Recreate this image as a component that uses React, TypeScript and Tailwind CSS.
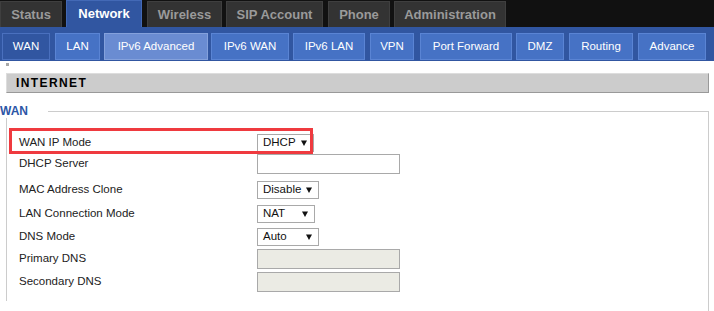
import React from "react";

const topTabs = [
  { label: "Status", w: "w-[62px]", ml: "ml-0", active: false },
  { label: "Network", w: "w-[76px]", ml: "ml-[4px]", active: true },
  { label: "Wireless", w: "w-[75px]", ml: "ml-[5px]", active: false },
  { label: "SIP Account", w: "w-[97px]", ml: "ml-[4px]", active: false },
  { label: "Phone", w: "w-[62px]", ml: "ml-[5px]", active: false },
  { label: "Administration", w: "w-[112px]", ml: "ml-[4px]", active: false },
];

const subTabs = [
  { label: "WAN", w: "w-[48px]", ml: "ml-[2px]", kind: "active" },
  { label: "LAN", w: "w-[45px]", ml: "ml-[5px]", kind: "normal" },
  { label: "IPv6 Advanced", w: "w-[104px]", ml: "ml-[4px]", kind: "hover" },
  { label: "IPv6 WAN", w: "w-[78px]", ml: "ml-[3px]", kind: "normal" },
  { label: "IPv6 LAN", w: "w-[72px]", ml: "ml-[4px]", kind: "normal" },
  { label: "VPN", w: "w-[44px]", ml: "ml-[5px]", kind: "normal" },
  { label: "Port Forward", w: "w-[92px]", ml: "ml-[6px]", kind: "normal" },
  { label: "DMZ", w: "w-[48px]", ml: "ml-[4px]", kind: "normal" },
  { label: "Routing", w: "w-[64px]", ml: "ml-[5px]", kind: "normal" },
  { label: "Advance", w: "w-[68px]", ml: "ml-[5px]", kind: "normal" },
];

function Arrow() {
  return (
    <svg width="6" height="6" viewBox="0 0 6 6" className="shrink-0">
      <polygon points="0,0.5 6,0.5 3,6" fill="#111" />
    </svg>
  );
}

function Select({ value, w }: { value: string; w: string }) {
  return (
    <div
      className={`${w} h-[18px] shrink-0 border border-[#a9a9a9] bg-white flex items-center justify-between pl-[5px] pr-[6px] text-[11.5px] text-[#111]`}
    >
      <span>{value}</span>
      <Arrow />
    </div>
  );
}

function Input({ disabled }: { disabled?: boolean }) {
  return (
    <div
      className={`w-[143px] h-[20px] shrink-0 border border-[#a9a9a9] ${
        disabled ? "bg-[#ebebe4]" : "bg-white"
      }`}
    />
  );
}

function Row({
  label,
  mt,
  children,
}: {
  label: string;
  mt: string;
  children: React.ReactNode;
}) {
  return (
    <div className={`flex items-center ${mt}`}>
      <div className="w-[250px] shrink-0 pl-[12px] text-[11.5px] text-[#222] leading-none">
        {label}
      </div>
      {children}
    </div>
  );
}

export default function App() {
  return (
    <div className="relative w-[714px] h-[311px] overflow-hidden bg-white font-['Liberation_Sans',Arial,sans-serif]">
      {/* top tabs */}
      <div className="h-[27px] bg-[#111111] flex items-end">
        {topTabs.map((t) =>
          t.active ? (
            <div
              key={t.label}
              className={`${t.w} ${t.ml} h-[27px] bg-[#3156a1] border-t border-l border-r border-[#4369b6] flex items-center justify-center text-[13px] font-bold text-white`}
            >
              {t.label}
            </div>
          ) : (
            <div
              key={t.label}
              className={`${t.w} ${t.ml} h-[26px] bg-[#333333] border-t border-l border-r border-[#3f3f3f] flex items-center justify-center pt-[1px] text-[13px] font-bold text-[#9a9a9a]`}
            >
              {t.label}
            </div>
          )
        )}
      </div>

      {/* sub tabs */}
      <div className="h-[34px] bg-[#3156a1] flex items-start pt-[6px]">
        {subTabs.map((t) => (
          <div
            key={t.label}
            className={`${t.w} ${t.ml} h-[27px] border flex items-center justify-center text-[11.5px] text-white ${
              t.kind === "active"
                ? "bg-[#3156a1] border-[#4a70be]"
                : t.kind === "hover"
                ? "bg-[#6a8cd2] border-[#84a1dc]"
                : "bg-[#4672c5] border-[#5a84d4]"
            }`}
          >
            {t.label}
          </div>
        ))}
      </div>

      {/* tiny image placeholder */}
      <div className="ml-[6px] mt-[2px] w-[3px] h-[3px] bg-[#a8a8a8]" />

      {/* INTERNET header */}
      <div className="ml-[6px] mt-[7px] w-[703px] h-[20px] bg-[#cccccc] border-t border-l border-[#dddddd] border-b border-r border-b-[#999999] border-r-[#999999] flex items-center pl-[9px] text-[12px] font-bold tracking-[1.4px] text-black">
        INTERNET
      </div>

      {/* WAN legend */}
      <div className="mt-[11px] flex h-[14px]">
        <div className="w-[48px] text-[12px] font-bold text-[#2c56a6] leading-[14px]">
          WAN
        </div>
        <div className="w-[661px] mt-[7px] border-t border-r border-[#cccccc]" />
      </div>

      {/* fieldset body */}
      <div className="ml-[6px] w-[703px] h-[200px] border-r border-[#cccccc]">
        <div className="h-[183px] border-l border-[#cccccc] flex flex-col">
          <Row label="WAN IP Mode" mt="mt-[16px]">
            <Select value="DHCP" w="w-[57px]" />
          </Row>
          <Row label="DHCP Server" mt="mt-[2px]">
            <Input />
          </Row>
          <Row label="MAC Address Clone" mt="mt-[7px]">
            <Select value="Disable" w="w-[62px]" />
          </Row>
          <Row label="LAN Connection Mode" mt="mt-[6px]">
            <Select value="NAT" w="w-[58px]" />
          </Row>
          <Row label="DNS Mode" mt="mt-[5px]">
            <Select value="Auto" w="w-[62px]" />
          </Row>
          <Row label="Primary DNS" mt="mt-[3px]">
            <Input disabled />
          </Row>
          <Row label="Secondary DNS" mt="mt-[3px]">
            <Input disabled />
          </Row>
        </div>
      </div>

      {/* red annotation overlay */}
      <div className="absolute left-[9px] top-[128px] w-[304px] h-[26px] border-[3px] border-[#ef3a3f] pointer-events-none" />
    </div>
  );
}
